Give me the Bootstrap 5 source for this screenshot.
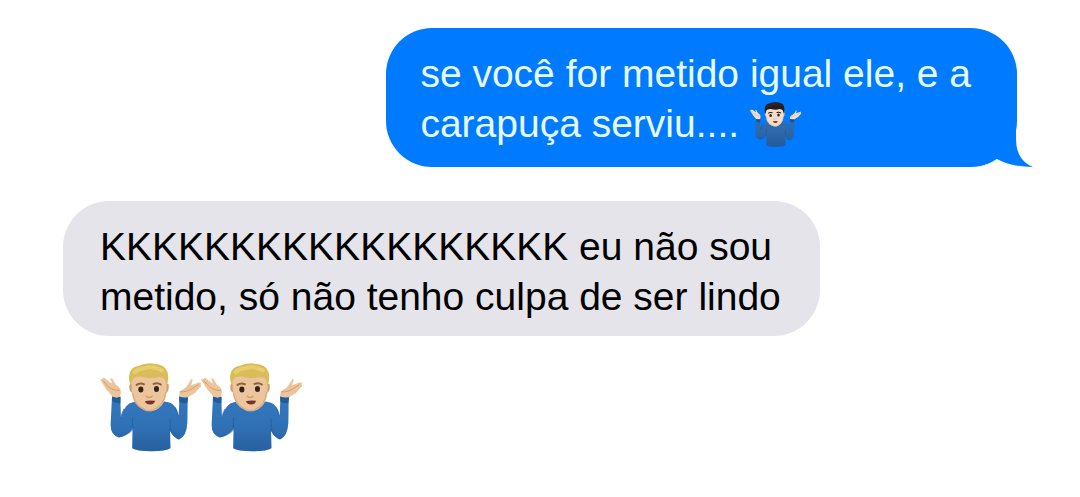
<!DOCTYPE html>
<html lang="pt-BR">
<head>
<meta charset="utf-8">
<meta name="viewport" content="width=device-width, initial-scale=1">
<title>Conversa</title>
<link href="https://cdn.jsdelivr.net/npm/bootstrap@5.3.0/dist/css/bootstrap.min.css" rel="stylesheet">
<style>
  body { background: #fff; font-family: "Liberation Sans", Arial, sans-serif; }
  .chat { padding: 28px 63px; font-size: 39px; line-height: 50px; }
  .bubble { border-radius: 46px; white-space: nowrap; }
  .sent { width: 66.1%; padding: 21px 34px 18px; background: #007aff; color: #e6fbff; }
  .received { width: 79.3%; margin-top: 34px; padding: 21px 36px 14px 37px; background: #e5e4ea; color: #000; }
  .tail { right: -16px; bottom: 0; width: 56px; height: 46px; }
  .emoji-sm { width: 51px; height: 47px; margin: -6px 0; vertical-align: -5px; --hair: #251c1b; --hair2: #3a2b27; --skin: #f5dccb; --skin2: #dcb69f; --brow: #261b19; --shirt: #2f6cb0; --shirt2: #234f83; }
  .emoji-lg { width: 101px; height: 93px; --hair: #d9bd58; --hair2: #f0db80; --skin: #edc59c; --skin2: #d19c70; --brow: #8d6432; --shirt: #3477bd; --shirt2: #235a9a; }
  .reactions { margin: 25px 37px 0; }
</style>
</head>
<body>
<svg class="position-absolute" width="0" height="0" aria-hidden="true">
  <defs>
    <linearGradient id="fold" x1="0" x2="0" y1="0" y2="1">
      <stop offset="0" stop-color="#123f78" stop-opacity="0"/>
      <stop offset=".5" stop-color="#123f78" stop-opacity=".1"/>
      <stop offset="1" stop-color="#123f78" stop-opacity=".4"/>
    </linearGradient>
  </defs>
  <symbol id="shrug" viewBox="10 16 304 280">
    <path style="fill:var(--skin)" d="M47 124C42 115 35 110 29 102L12 75C9 68 15 68 19 72L34 82L18 72C16 66 22 65 27 70L43 82C47 85 46 80 42 73C39 66 45 66 49 72L57 87C66 92 74 102 73 110L70 126Z"/>
    <path style="fill:var(--skin)" d="M274 127L249 124C247 113 251 103 262 100C272 94 276 86 282 75C286 67 291 71 288 77L284 89L307 81C315 79 317 83 311 86L316 87C321 89 316 93 311 95L298 110C291 118 281 118 275 127Z"/>
    <path style="fill:none;stroke:var(--skin2);stroke-width:3" d="M19 75Q35 98 51 102Q62 106 70 104M250 109Q273 110 289 98L307 87"/>
    <path style="fill:var(--shirt)" d="M46 124Q60 129 71 124L73 187Q80 157 98 144Q112 137 133 137H188Q214 136 227 145Q241 156 247 184L249 123Q261 129 274 125L273 201Q271 242 248 252Q231 247 221 226L222 279Q208 288 165 288Q120 288 107 279L108 219Q94 239 67 246Q42 240 42 208Z"/>
    <path fill="url(#fold)" d="M46 124Q60 129 71 124L73 187Q80 157 98 144Q112 137 133 137H188Q214 136 227 145Q241 156 247 184L249 123Q261 129 274 125L273 201Q271 242 248 252Q231 247 221 226L222 279Q208 288 165 288Q120 288 107 279L108 219Q94 239 67 246Q42 240 42 208Z"/>
    <path style="fill:var(--shirt2)" d="M46 123Q59 129 72 124L71 143Q58 144 47 137ZM248 123Q261 128 275 125L273 142Q257 145 249 139Z"/>
    <path style="fill:none;stroke:var(--shirt2);stroke-width:4;opacity:.6" d="M108 187L107 223Q92 240 68 244M221 190L222 226Q234 244 247 250M73 187Q75 173 83 160M247 184Q242 164 235 155"/>
    <path style="fill:var(--shirt2);opacity:.5" d="M125 137Q157 184 196 137L190 133H130Z"/>
    <path style="fill:var(--skin2)" d="M106 86Q98 81 98 96Q99 110 109 112ZM208 86Q218 80 217 94Q217 110 207 112Z"/>
    <path style="fill:var(--skin)" d="M104 70Q105 46 157 46Q210 46 211 73L210 109Q206 154 171 166Q157 170 143 164Q108 149 106 111Z"/>
    <path style="fill:none;stroke:var(--skin2);stroke-width:4;opacity:.65" d="M108 112Q113 149 144 162Q158 168 171 163Q204 149 208 109"/>
    <path style="fill:var(--hair)" d="M104 93Q94 72 99 54Q105 33 125 31Q148 20 172 24Q205 26 213 48Q219 70 210 92L206 72Q200 65 188 64Q161 72 133 63Q113 62 107 73Z"/>
    <path style="fill:none;stroke:var(--hair2);stroke-width:12;opacity:.55" stroke-linecap="round" d="M114 50Q124 40 143 38Q170 30 196 44"/>
    <path style="fill:none;stroke:var(--brow);stroke-width:6" stroke-linecap="round" d="M120 88Q130 81 142 86M171 85Q184 80 193 87"/>
    <ellipse cx="133" cy="102" rx="9" ry="8" fill="#fff"/>
    <ellipse cx="180" cy="100" rx="9" ry="8" fill="#fff"/>
    <ellipse cx="133" cy="102" rx="8" ry="9" fill="#392219"/>
    <ellipse cx="180" cy="100" rx="8" ry="9" fill="#392219"/>
    <path style="fill:none;stroke:var(--skin2);stroke-width:4" stroke-linecap="round" d="M149 122Q157 130 167 122"/>
    <path fill="#76332b" d="M145 137Q160 133 176 136Q173 147 161 147Q149 147 145 137Z"/>
  </symbol>
</svg>
<main class="chat d-flex flex-column">
  <div class="bubble sent position-relative align-self-end">
    se você for metido igual ele, e a<br>carapuça serviu.... <svg class="emoji-sm" role="img" aria-label="Homem dando de ombros"><use href="#shrug"/></svg>
    <svg class="tail position-absolute" viewBox="0 0 56 46" aria-hidden="true">
      <path fill="#fff" d="M0 46Q12 44 20 38Q31 45 56 46Z"/>
      <path fill="#007aff" d="M20 38L20 0L39 0L39 18Q39 39 56 46Q34 46 20 38Z"/>
    </svg>
  </div>
  <div class="bubble received align-self-start">KKKKKKKKKKKKKKKKKK eu não sou<br>metido, só não tenho culpa de ser lindo</div>
  <div class="reactions d-flex">
    <svg class="emoji-lg" role="img" aria-label="Homem loiro dando de ombros"><use href="#shrug"/></svg>
    <svg class="emoji-lg" role="img" aria-label="Homem loiro dando de ombros"><use href="#shrug"/></svg>
  </div>
</main>
<script src="https://cdn.jsdelivr.net/npm/bootstrap@5.3.0/dist/js/bootstrap.bundle.min.js"></script>
</body>
</html>
